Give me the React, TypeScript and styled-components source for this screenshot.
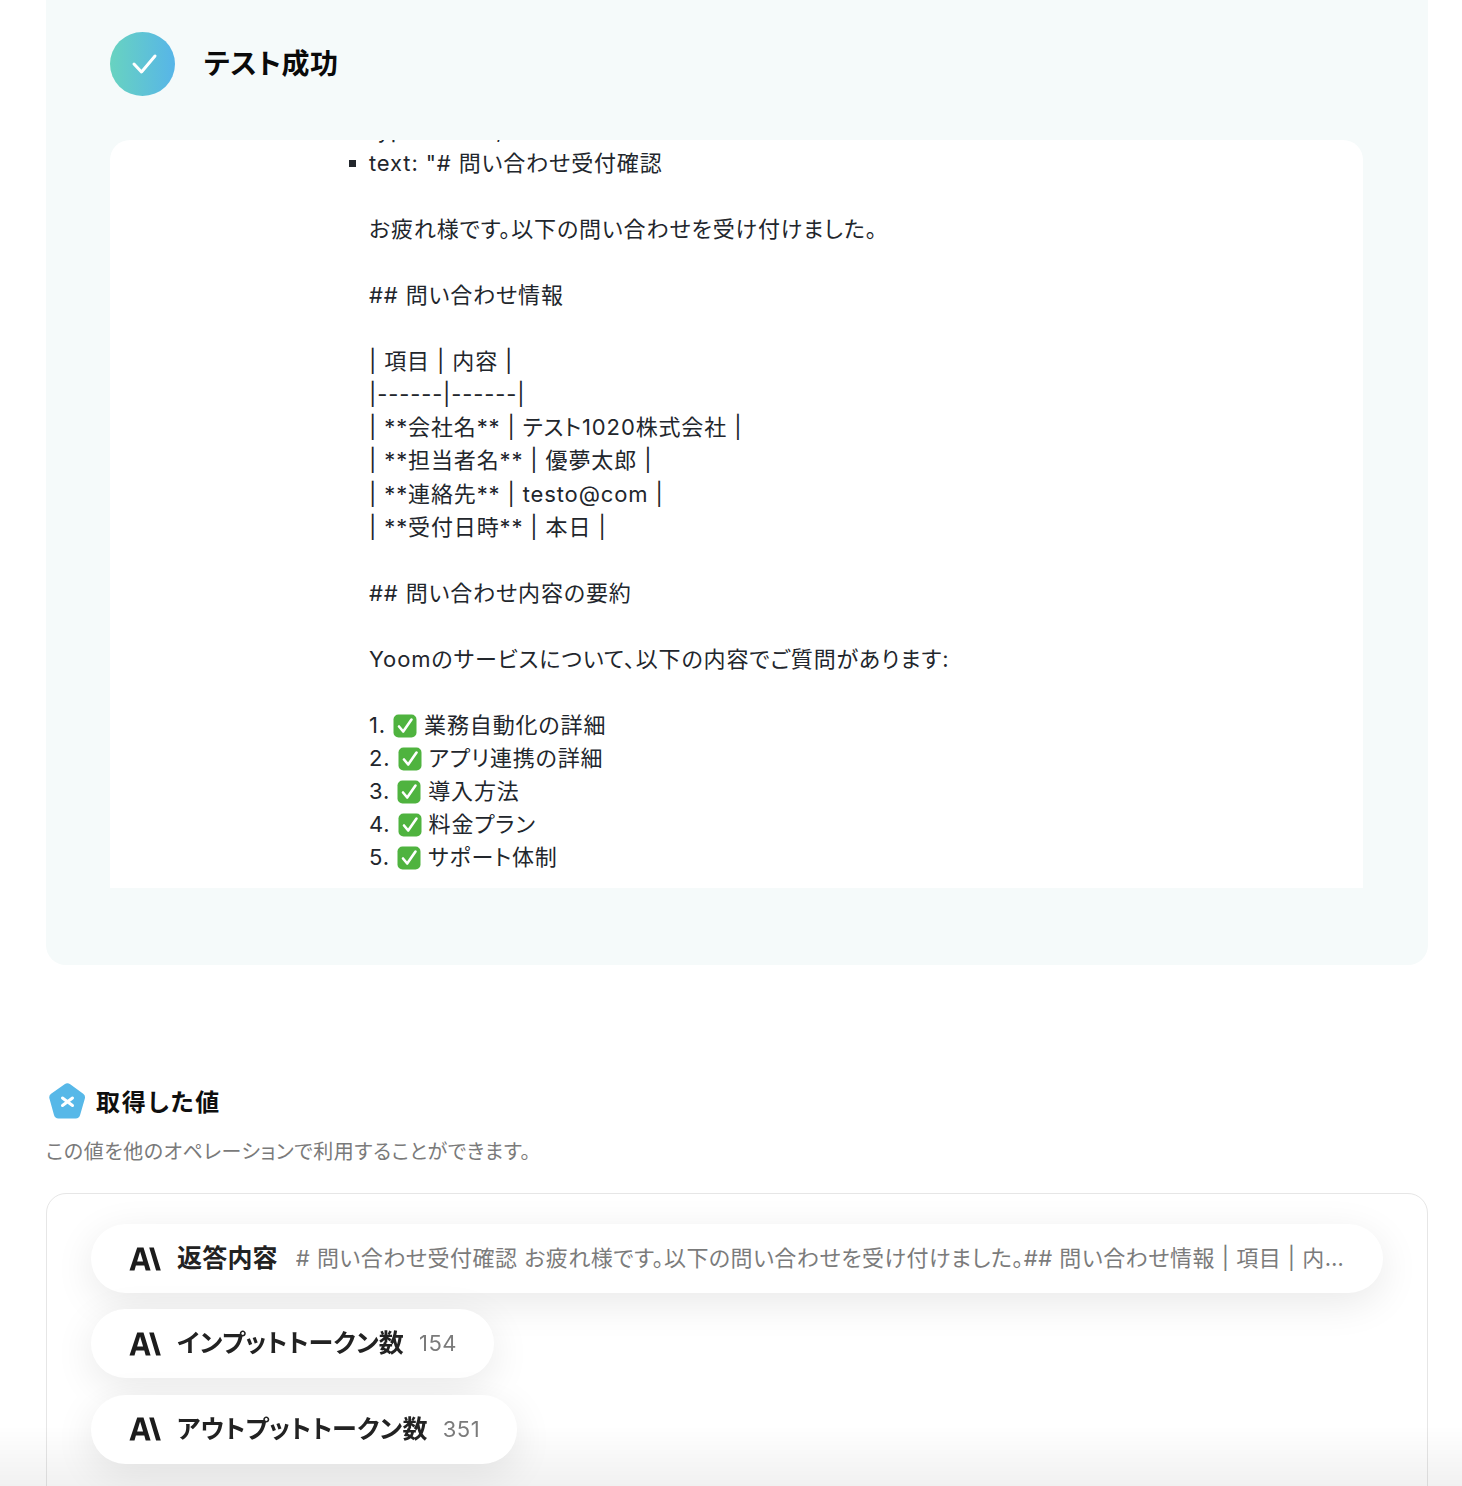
import React from "react";
import styled, { createGlobalStyle } from "styled-components";

const GlobalStyle = createGlobalStyle`
  html, body {
    margin: 0;
    padding: 0;
    background: #fff;
  }
  body {
    font-family: Inter, "Noto Sans CJK JP", sans-serif;
    font-feature-settings: "palt";
    color: #22262c;
  }
`;

const Page = styled.div`
  height: 100vh;
  overflow: hidden;
  padding: 0 34px 0 46px;
  box-sizing: border-box;
`;

const ResultPanel = styled.section`
  height: 965px;
  background: #f5fafa;
  border-radius: 0 0 20px 20px;
  padding: 32px 65px 0 64px;
  box-sizing: border-box;
`;

const ResultHeader = styled.div`
  display: flex;
  align-items: center;
  gap: 29px;
  height: 64px;
  margin-bottom: 44px;
`;

const SuccessBadge = styled.div`
  width: 65px;
  height: 64px;
  border-radius: 50%;
  background: linear-gradient(90deg, #68d3c0, #57b5e8);
  display: flex;
  align-items: center;
  justify-content: center;
`;

const ResultTitle = styled.h2`
  margin: -4px 0 0;
  font-size: 28px;
  font-weight: 700;
  letter-spacing: 0.6px;
  color: #0a0a0a;
`;

const OutputBox = styled.div`
  height: 748px;
  background: #fff;
  border-radius: 20px 20px 0 0;
  overflow: hidden;
`;

const OutputList = styled.ul`
  margin: -26px 0 0;
  padding: 0 0 0 259px;
  list-style: none;
  font-size: 22px;
  line-height: 33.05px;
  letter-spacing: 0.87px;
`;

const OutputItem = styled.li`
  position: relative;
  white-space: pre;

  &::before {
    content: "";
    position: absolute;
    left: -20px;
    top: 13px;
    width: 7px;
    height: 7px;
    background: #22262c;
  }
`;

const OutputLine = styled.div`
  min-height: 33.05px;
`;

const CheckEmoji = styled.svg`
  width: 24px;
  height: 24px;
  vertical-align: -5px;
  margin: 0 7px 0 0;
`;

const ValuesHeader = styled.div`
  display: flex;
  align-items: center;
  gap: 10px;
  margin: 116px 0 0 3px;
  height: 40px;
`;

const ValuesTitle = styled.h3`
  margin: -2px 0 0;
  font-size: 24px;
  font-weight: 700;
  letter-spacing: 1.8px;
  color: #0f0f0f;
`;

const ValuesNote = styled.p`
  margin: 18px 0 27px;
  font-size: 20px;
  line-height: 27px;
  letter-spacing: 0.55px;
  color: #7a7a7a;
`;

const ValuesCard = styled.div`
  height: 400px;
  border: 1px solid #e6e6e6;
  border-radius: 20px;
  padding: 30px 44px;
  box-sizing: border-box;
  display: flex;
  flex-direction: column;
  align-items: flex-start;
  gap: 16.4px;
`;

const ValuePill = styled.div<{ $wide?: boolean }>`
  position: relative;
  z-index: 1;
  display: flex;
  align-items: center;
  gap: ${(p) => (p.$wide ? "18px" : "15px")};
  box-sizing: border-box;
  width: ${(p) => (p.$wide ? "100%" : "auto")};
  height: 69px;
  padding: 0 ${(p) => (p.$wide ? "30px" : "37px")} 0 38px;
  border-radius: 35px;
  background: #fff;
  box-shadow: 0 10px 40px rgba(0, 0, 0, 0.09);
`;

const ValueLabel = styled.span`
  display: flex;
  align-items: center;
  gap: 16px;
  flex-shrink: 0;
  font-size: 25px;
  font-weight: 700;
  letter-spacing: 0.2px;
  color: #222;
`;

const LabelText = styled.span`
  margin-bottom: 5px;
`;

const ValueText = styled.span<{ $wide?: boolean }>`
  min-width: 0;
  margin-bottom: ${(p) => (p.$wide ? "6px" : "1px")};
  overflow: hidden;
  white-space: nowrap;
  text-overflow: ellipsis;
  font-size: 22px;
  letter-spacing: 0.5px;
  color: #7b7b7b;
`;

const BottomFade = styled.div`
  position: fixed;
  z-index: 0;
  left: 0;
  right: 0;
  bottom: 0;
  height: 60px;
  background: linear-gradient(180deg, rgba(0, 0, 0, 0), rgba(0, 0, 0, 0.055));
  pointer-events: none;
`;

const AnthropicLogo = () => (
  <svg width="32" height="24" viewBox="0 0 32 24" aria-hidden="true">
    <path
      fill="#1c1c1c"
      d="M8.2 0.5h6.3L21.6 23.5h-4.9l-1.4-4.9H6.9l-1.4 4.9H0.5L8.2 0.5zM8.1 14.6h6L11.1 4.6 8.1 14.6z"
    />
    <path fill="#1c1c1c" d="M20.2 0.5h4.6l7 23h-4.7l-6.9-23z" />
  </svg>
);

const Check = () => (
  <CheckEmoji viewBox="0 0 24 24" aria-hidden="true">
    <rect x="0.5" y="0.5" width="23" height="23" rx="5" fill="#4fb33f" />
    <path
      d="M6 12.5l4.2 5L18.5 5.5"
      fill="none"
      stroke="#fff"
      strokeWidth="2.6"
      strokeLinecap="round"
      strokeLinejoin="round"
    />
  </CheckEmoji>
);

const outputLines: React.ReactNode[] = [
  'text: "# 問い合わせ受付確認',
  "",
  "お疲れ様です。以下の問い合わせを受け付けました。",
  "",
  "## 問い合わせ情報",
  "",
  "| 項目 | 内容 |",
  "|------|------|",
  "| **会社名** | テスト1020株式会社 |",
  "| **担当者名** | 優夢太郎 |",
  "| **連絡先** | testo@com |",
  "| **受付日時** | 本日 |",
  "",
  "## 問い合わせ内容の要約",
  "",
  "Yoomのサービスについて、以下の内容でご質問があります:",
  "",
  <>1. <Check />業務自動化の詳細</>,
  <>2. <Check />アプリ連携の詳細</>,
  <>3. <Check />導入方法</>,
  <>4. <Check />料金プラン</>,
  <>5. <Check />サポート体制</>,
];

const values = [
  {
    label: "返答内容",
    value:
      "# 問い合わせ受付確認 お疲れ様です。以下の問い合わせを受け付けました。## 問い合わせ情報 | 項目 | 内容 | |------|------| | **会社名** | テスト1020株式会社 |",
    wide: true,
  },
  { label: "インプットトークン数", value: "154" },
  { label: "アウトプットトークン数", value: "351" },
];

export default function App() {
  return (
    <Page>
      <GlobalStyle />
      <ResultPanel>
        <ResultHeader>
          <SuccessBadge>
            <svg width="32" height="22" viewBox="0 0 32 22" aria-hidden="true">
              <path
                d="M7 11l7.5 8L28 3"
                fill="none"
                stroke="#fff"
                strokeWidth="3"
                strokeLinecap="round"
                strokeLinejoin="round"
              />
            </svg>
          </SuccessBadge>
          <ResultTitle>テスト成功</ResultTitle>
        </ResultHeader>
        <OutputBox>
          <OutputList>
            <li>type: "text",</li>
            <OutputItem>
              {outputLines.map((line, i) => (
                <OutputLine key={i}>{line}</OutputLine>
              ))}
            </OutputItem>
          </OutputList>
        </OutputBox>
      </ResultPanel>

      <ValuesHeader>
        <svg width="37" height="36" viewBox="0 0 37 36" aria-hidden="true">
          <path
            fill="#57b8e8"
            d="M15.6 1.2a4.6 4.6 0 0 1 5.6 0l13 9.6a4.4 4.4 0 0 1 1.6 4.9l-4.7 16.4a4.6 4.6 0 0 1-4.4 3.4H9.4A4.6 4.6 0 0 1 5 32.1L.5 15.7a4.4 4.4 0 0 1 1.6-4.9l13.5-9.6z"
          />
          <path
            d="M13.5 15l10 7.5M23.5 15l-10 7.5"
            fill="none"
            stroke="#fff"
            strokeWidth="3"
            strokeLinecap="round"
          />
        </svg>
        <ValuesTitle>取得した値</ValuesTitle>
      </ValuesHeader>
      <ValuesNote>この値を他のオペレーションで利用することができます。</ValuesNote>
      <ValuesCard>
        {values.map((v) => (
          <ValuePill key={v.label} $wide={v.wide}>
            <ValueLabel>
              <AnthropicLogo />
              <LabelText>{v.label}</LabelText>
            </ValueLabel>
            <ValueText $wide={v.wide}>{v.value}</ValueText>
          </ValuePill>
        ))}
      </ValuesCard>
      <BottomFade />
    </Page>
  );
}
